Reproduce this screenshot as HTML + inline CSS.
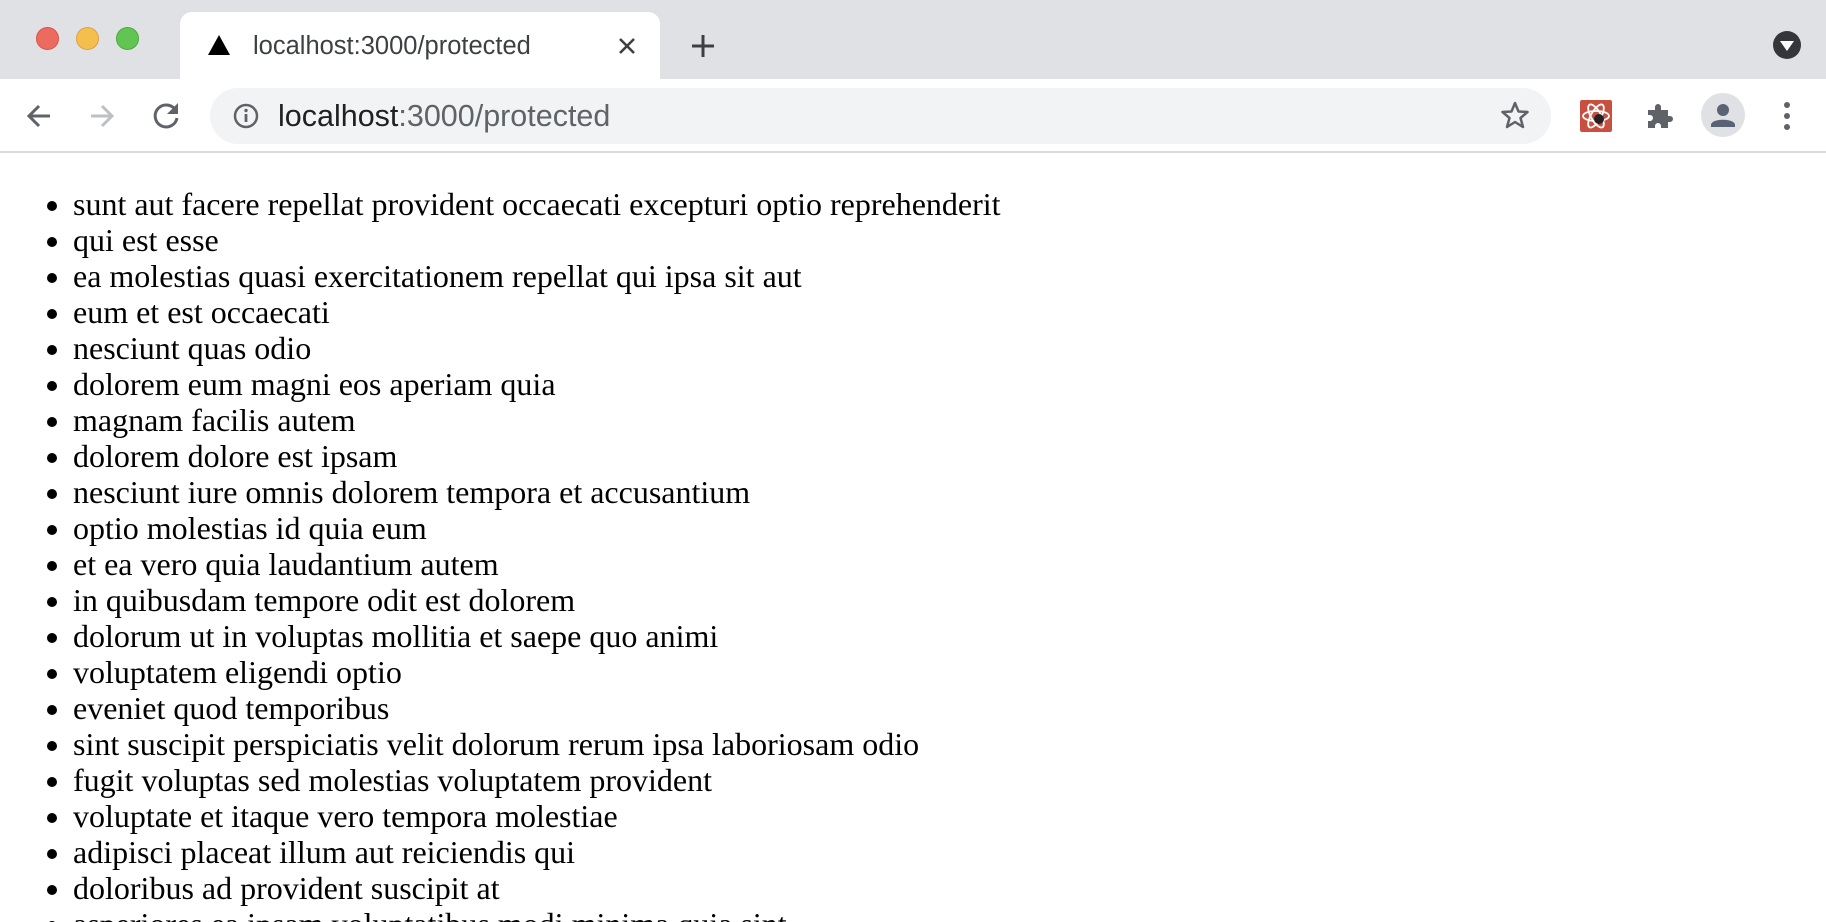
<!DOCTYPE html>
<html><head><meta charset="utf-8"><style>
*{margin:0;padding:0;box-sizing:border-box}
html,body{width:1826px;height:922px;overflow:hidden;background:#fff}
#wrap{position:relative;width:1826px;height:922px;overflow:hidden}
.tabbar{position:absolute;left:0;top:0;width:1826px;height:79px;background:#dfe1e5}
.light{position:absolute;top:27px;width:23px;height:23px;border-radius:50%}
.tab{position:absolute;left:180px;top:12px;width:480px;height:67px;background:#fff;border-radius:12px 12px 0 0}
.tabtitle{position:absolute;left:253px;top:32px;font:25.5px "Liberation Sans",sans-serif;color:#3c4043}
.toolbar{position:absolute;left:0;top:79px;width:1826px;height:74px;background:#fff;border-bottom:2px solid #dadce0}
.omni{position:absolute;left:210px;top:88px;width:1341px;height:56px;background:#f1f3f4;border-radius:28px}
.url{position:absolute;left:278px;top:99px;font:30.5px "Liberation Sans",sans-serif;color:#202124}
.url span{color:#5f6368}
svg{position:absolute}
ul{position:absolute;left:0;top:186px;padding-left:73px;font:32px/36px "Liberation Serif",serif;color:#000;list-style:disc;white-space:nowrap}
</style></head><body><div id="wrap">
<div class="tabbar"></div>
<div class="light" style="left:36px;background:#ed6a5e;border:1px solid #d9534a"></div>
<div class="light" style="left:76px;background:#f5bf4f;border:1px solid #dca438"></div>
<div class="light" style="left:116px;background:#61c554;border:1px solid #4ea83f"></div>
<div class="tab"></div>
<svg style="left:207px;top:34px" width="24" height="22"><polygon points="12,1 23,21 1,21" fill="#000"/></svg>
<div class="tabtitle">localhost:3000/protected</div>
<svg style="left:616px;top:35px" width="22" height="22"><path d="M4 4L18 18M18 4L4 18" stroke="#3c4043" stroke-width="2.6"/></svg>
<svg style="left:690px;top:33px" width="26" height="26"><path d="M13 2V24M2 13H24" stroke="#3c4043" stroke-width="3"/></svg>
<svg style="left:1773px;top:31px" width="28" height="28"><circle cx="14" cy="14" r="14" fill="#35363a"/><polygon points="7,10 21,10 14,20" fill="#fff"/></svg>
<div class="toolbar"></div>
<svg style="left:24px;top:101px" width="30" height="30"><path d="M26 15H5M15 5L5 15L15 25" stroke="#5f6368" stroke-width="3" fill="none"/></svg>
<svg style="left:87px;top:101px" width="30" height="30"><path d="M4 15H25M15 5L25 15L15 25" stroke="#bdc1c6" stroke-width="3" fill="none"/></svg>
<svg style="left:152px;top:100px" width="30" height="30"><path d="M24 11A11 11 0 1 0 25 18" stroke="#5f6368" stroke-width="3" fill="none"/><polygon points="26,3 26,14 15,14" fill="#5f6368"/></svg>
<div class="omni"></div>
<svg style="left:232px;top:102px" width="28" height="28"><circle cx="14" cy="14" r="11" stroke="#5f6368" stroke-width="2.5" fill="none"/><path d="M14 12V20" stroke="#5f6368" stroke-width="2.8"/><circle cx="14" cy="8.5" r="1.7" fill="#5f6368"/></svg>
<div class="url">localhost<span>:3000/protected</span></div>
<svg style="left:1500px;top:100px" width="30" height="30"><polygon points="15,3 18.5,11.5 27.5,12 20.5,18 23,27 15,22 7,27 9.5,18 2.5,12 11.5,11.5" stroke="#5f6368" stroke-width="2.5" fill="none" stroke-linejoin="round"/></svg>
<div style="position:absolute;left:1580px;top:100px;width:32px;height:32px;background:#c85040;border-radius:2px"></div>
<svg style="left:1580px;top:100px" width="32" height="32"><g stroke="#fff" stroke-width="1.8" fill="none"><ellipse cx="16" cy="16" rx="13" ry="5"/><ellipse cx="16" cy="16" rx="13" ry="5" transform="rotate(60 16 16)"/><ellipse cx="16" cy="16" rx="13" ry="5" transform="rotate(-60 16 16)"/></g><circle cx="19" cy="19" r="5" fill="#222"/></svg>
<svg style="left:1644px;top:100px" width="32" height="32"><path d="M4 10H11V7A3 3 0 0 1 17 7V10H24V16H26A3 3 0 0 1 26 22H24V28H17V26A3 3 0 0 0 11 26V28H4V21H6A3 3 0 0 0 6 15H4Z" fill="#5f6368"/></svg>
<svg style="left:1701px;top:93px" width="44" height="44"><circle cx="22" cy="22" r="22" fill="#dfe1e5"/><circle cx="22" cy="17" r="6" fill="#5a6275"/><path d="M10 32C10 25 34 25 34 32V34H10Z" fill="#5a6275"/></svg>
<svg style="left:1780px;top:100px" width="14" height="32"><circle cx="7" cy="5" r="3" fill="#5f6368"/><circle cx="7" cy="16" r="3" fill="#5f6368"/><circle cx="7" cy="27" r="3" fill="#5f6368"/></svg>
<ul>
<li>sunt aut facere repellat provident occaecati excepturi optio reprehenderit</li>
<li>qui est esse</li>
<li>ea molestias quasi exercitationem repellat qui ipsa sit aut</li>
<li>eum et est occaecati</li>
<li>nesciunt quas odio</li>
<li>dolorem eum magni eos aperiam quia</li>
<li>magnam facilis autem</li>
<li>dolorem dolore est ipsam</li>
<li>nesciunt iure omnis dolorem tempora et accusantium</li>
<li>optio molestias id quia eum</li>
<li>et ea vero quia laudantium autem</li>
<li>in quibusdam tempore odit est dolorem</li>
<li>dolorum ut in voluptas mollitia et saepe quo animi</li>
<li>voluptatem eligendi optio</li>
<li>eveniet quod temporibus</li>
<li>sint suscipit perspiciatis velit dolorum rerum ipsa laboriosam odio</li>
<li>fugit voluptas sed molestias voluptatem provident</li>
<li>voluptate et itaque vero tempora molestiae</li>
<li>adipisci placeat illum aut reiciendis qui</li>
<li>doloribus ad provident suscipit at</li>
<li>asperiores ea ipsam voluptatibus modi minima quia sint</li>
</ul>
</div></body></html>
